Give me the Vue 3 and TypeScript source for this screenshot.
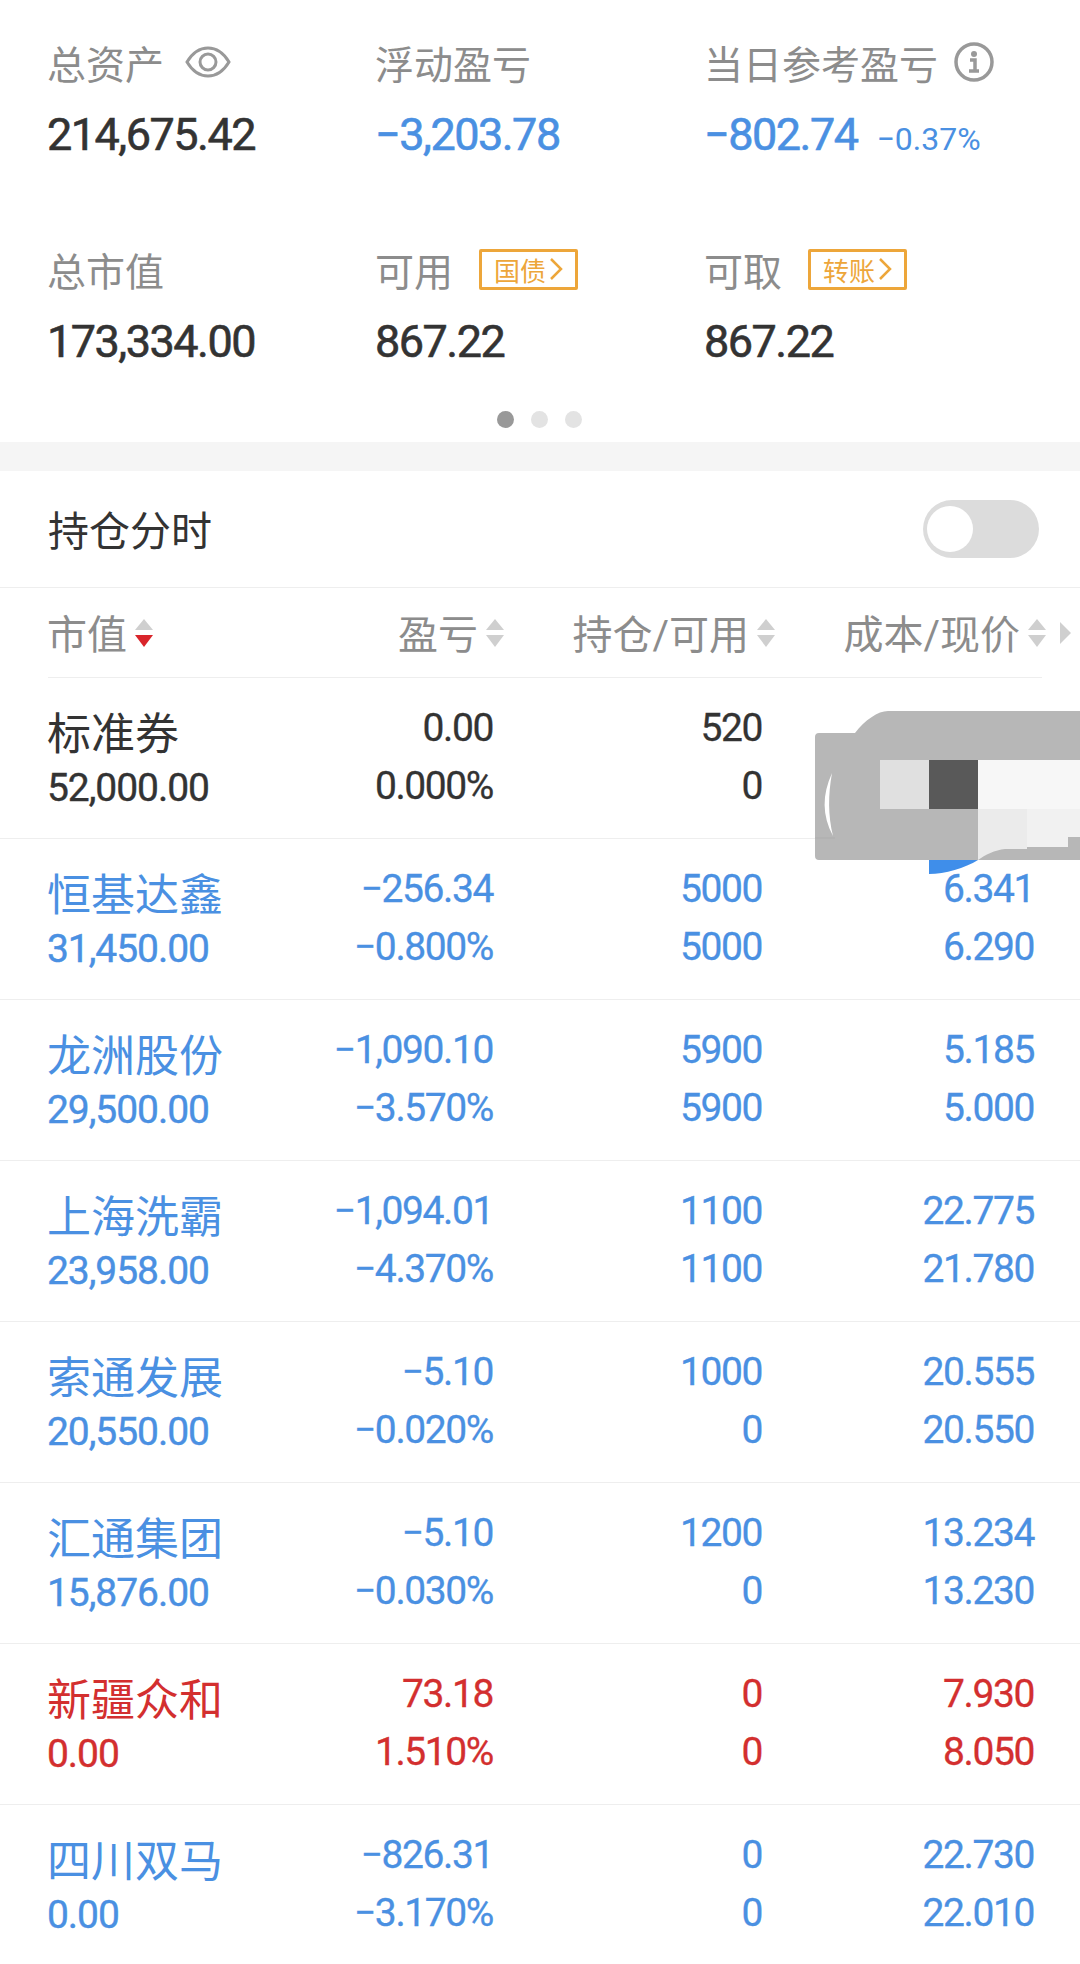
<script setup lang="ts">
interface Position {
  name: string;
  value: string;
  profit: string;
  ratio: string;
  hold: string;
  free: string;
  cost: string;
  price: string;
  tone: "plain" | "down" | "up";
}

const positions: Position[] = [
  { name: "标准券", value: "52,000.00", profit: "0.00", ratio: "0.000%", hold: "520", free: "0", cost: "", price: "", tone: "plain" },
  { name: "恒基达鑫", value: "31,450.00", profit: "−256.34", ratio: "−0.800%", hold: "5000", free: "5000", cost: "6.341", price: "6.290", tone: "down" },
  { name: "龙洲股份", value: "29,500.00", profit: "−1,090.10", ratio: "−3.570%", hold: "5900", free: "5900", cost: "5.185", price: "5.000", tone: "down" },
  { name: "上海洗霸", value: "23,958.00", profit: "−1,094.01", ratio: "−4.370%", hold: "1100", free: "1100", cost: "22.775", price: "21.780", tone: "down" },
  { name: "索通发展", value: "20,550.00", profit: "−5.10", ratio: "−0.020%", hold: "1000", free: "0", cost: "20.555", price: "20.550", tone: "down" },
  { name: "汇通集团", value: "15,876.00", profit: "−5.10", ratio: "−0.030%", hold: "1200", free: "0", cost: "13.234", price: "13.230", tone: "down" },
  { name: "新疆众和", value: "0.00", profit: "73.18", ratio: "1.510%", hold: "0", free: "0", cost: "7.930", price: "8.050", tone: "up" },
  { name: "四川双马", value: "0.00", profit: "−826.31", ratio: "−3.170%", hold: "0", free: "0", cost: "22.730", price: "22.010", tone: "down" },
];

const columns = [
  { label: "市值", active: true },
  { label: "盈亏", active: false },
  { label: "持仓/可用", active: false },
  { label: "成本/现价", active: false },
];
</script>

<template>
  <div class="page">
    <section class="summary">
      <div class="cell">
        <div class="label">
          总资产
          <svg class="eye" viewBox="0 0 46 32" width="46" height="32">
            <path d="M2 16C8 6 15 2 23 2s15 4 21 14c-6 10-13 14-21 14S8 26 2 16Z" />
            <circle cx="23" cy="16" r="8" />
          </svg>
        </div>
        <div class="amount">214,675.42</div>
      </div>
      <div class="cell">
        <div class="label">浮动盈亏</div>
        <div class="amount blue">−3,203.78</div>
      </div>
      <div class="cell">
        <div class="label">
          当日参考盈亏
          <svg class="info" viewBox="0 0 40 40" width="40" height="40">
            <circle cx="20" cy="20" r="18" />
            <circle class="dot" cx="20" cy="12" r="3" />
            <path d="M16 18h5v11M15 29h10" />
          </svg>
        </div>
        <div class="amount blue">−802.74<span class="pct">−0.37%</span></div>
      </div>
      <div class="cell">
        <div class="label">总市值</div>
        <div class="amount">173,334.00</div>
      </div>
      <div class="cell">
        <div class="label">
          可用
          <span class="tag">国债<svg viewBox="0 0 14 24" width="14" height="24"><path d="M2 2l10 10L2 22" /></svg></span>
        </div>
        <div class="amount">867.22</div>
      </div>
      <div class="cell">
        <div class="label">
          可取
          <span class="tag">转账<svg viewBox="0 0 14 24" width="14" height="24"><path d="M2 2l10 10L2 22" /></svg></span>
        </div>
        <div class="amount">867.22</div>
      </div>
    </section>

    <div class="dots">
      <i class="on"></i>
      <i></i>
      <i></i>
    </div>

    <div class="band"></div>

    <div class="toggle-row">
      <span>持仓分时</span>
      <div class="switch"><b></b></div>
    </div>

    <div class="head">
      <div v-for="(c, i) in columns" :key="c.label" class="head-cell">
        <span>{{ c.label }}</span>
        <svg class="sort" viewBox="0 0 18 28" width="18" height="28">
          <path d="M9 0l9 11H0Z" fill="#cfcfcf" />
          <path d="M0 16h18L9 28Z" :fill="c.active ? '#d9252b' : '#cfcfcf'" />
        </svg>
        <svg v-if="i === 3" class="more" viewBox="0 0 11 22" width="11" height="22">
          <path d="M0 0l11 11L0 22Z" fill="#cfcfcf" />
        </svg>
      </div>
    </div>

    <div class="list">
      <div v-for="p in positions" :key="p.name" class="row" :class="p.tone">
        <div class="name-cell">
          <div class="name">{{ p.name }}</div>
          <div class="value">{{ p.value }}</div>
        </div>
        <div class="num"><div>{{ p.profit }}</div><div>{{ p.ratio }}</div></div>
        <div class="num"><div>{{ p.hold }}</div><div>{{ p.free }}</div></div>
        <div class="num"><div>{{ p.cost }}</div><div>{{ p.price }}</div></div>
      </div>
    </div>

    <!-- redaction blob over the first row -->
    <svg class="blob" viewBox="810 705 270 175" width="270" height="175">
      <path d="M815 737q0-4 4-4H855C865 720 878 711 888 711H1080V860H819q-4 0-4-4Z" fill="#b7b7b7" />
      <path d="M832 773C822 795 822 815 833 836C828 815 828 795 832 773Z" fill="#fff" />
      <path d="M815 838H835" stroke="#adadad" stroke-width="1" />
      <rect x="880" y="760" width="49" height="49" fill="#e0e0e0" />
      <rect x="929" y="760" width="49" height="49" fill="#595959" />
      <rect x="978" y="760" width="102" height="49" fill="#f7f7f7" />
      <path d="M978 809H1027V849H1005C995 850 985 855 978 860Z" fill="#ebebeb" />
      <path d="M1027 809H1080V837H1068V847H1027Z" fill="#f1f1f1" />
      <path d="M929 860H978C965 868 945 874 929 874Z" fill="#3f8eea" />
    </svg>
  </div>
</template>

<style scoped>
.page {
  position: relative;
  width: 1080px;
  height: 1964px;
  overflow: hidden;
  background: #fff;
  font-family: Roboto, "Noto Sans CJK SC", sans-serif;
  color: #333;
}

/* ---------- summary ---------- */
.summary {
  display: grid;
  grid-template-columns: 328px 329px 1fr;
  grid-auto-rows: 207px;
  padding: 35px 0 0 47px;
  height: 402px;
  box-sizing: border-box;
}
.label {
  display: flex;
  align-items: center;
  height: 54px;
  font-size: 39px;
  color: #8c8c8c;
}
.amount {
  margin-top: 19px;
  font-size: 45px;
  line-height: 54px;
  letter-spacing: -1.5px;
  -webkit-text-stroke: 0.6px currentColor;
  white-space: nowrap;
}
.blue {
  color: #4a90e2;
}
.pct {
  margin-left: 19px;
  font-size: 32px;
  letter-spacing: 0;
  -webkit-text-stroke: 0;
}
.eye {
  margin-left: 21px;
  fill: none;
  stroke: #999;
  stroke-width: 3;
}
.info {
  margin-left: 16px;
  fill: none;
  stroke: #999;
  stroke-width: 3.5;
}
.info .dot {
  fill: #999;
  stroke: none;
}
.tag {
  display: flex;
  align-items: center;
  justify-content: center;
  gap: 3px;
  width: 99px;
  height: 41px;
  box-sizing: border-box;
  margin-left: 26px;
  border: 3px solid #eda63a;
  border-radius: 2px;
  font-size: 26px;
  color: #eda63a;
}
.tag svg {
  fill: none;
  stroke: #eda63a;
  stroke-width: 2.5;
}

.dots {
  display: flex;
  justify-content: center;
  gap: 17px;
  height: 40px;
  padding-right: 2px;
  padding-top: 9px;
  box-sizing: border-box;
}
.dots i {
  width: 17px;
  height: 17px;
  border-radius: 50%;
  background: #e3e3e3;
}
.dots i.on {
  background: #999;
}
.band {
  height: 29px;
  background: #f5f5f5;
}

/* ---------- toggle ---------- */
.toggle-row {
  display: flex;
  align-items: center;
  justify-content: space-between;
  height: 117px;
  padding: 0 41px 1px 48px;
  border-bottom: 1px solid #eee;
  box-sizing: border-box;
  font-size: 41px;
}
.toggle-row span {
  margin-bottom: 2px;
}
.switch {
  position: relative;
  width: 116px;
  height: 58px;
  border-radius: 29px;
  background: #dcdcdc;
}
.switch b {
  position: absolute;
  top: 6px;
  left: 4px;
  width: 46px;
  height: 46px;
  border-radius: 50%;
  background: #fff;
}

/* ---------- table ---------- */
.head {
  display: grid;
  grid-template-columns: 220px 236px 271px 296px;
  height: 90px;
  margin: 0 38px 0 48px;
  border-bottom: 1px solid #eee;
  box-sizing: border-box;
  font-size: 40px;
  color: #8c8c8c;
  width: 994px;
}
.head-cell {
  display: flex;
  align-items: center;
  justify-content: flex-end;
  gap: 8px;
  white-space: nowrap;
}
.head-cell span {
  margin-bottom: 2px;
}
.head-cell:first-child {
  justify-content: flex-start;
  margin-left: -1px;
}
.more {
  margin-left: 6px;
}
.row {
  display: grid;
  grid-template-columns: 220px 226px 269px 272px;
  height: 161px;
  padding: 0 45px 0 47px;
  border-bottom: 1px solid #eee;
  box-sizing: border-box;
  white-space: nowrap;
}
.row.down {
  color: #4a90e2;
}
.row.up {
  color: #d32f2f;
}
.name-cell {
  padding-top: 28px;
}
.name {
  font-size: 44px;
  line-height: 58px;
}
.value {
  font-size: 39px;
  line-height: 48px;
  letter-spacing: -1.05px;
  -webkit-text-stroke: 0.4px currentColor;
}
.num {
  padding-top: 21px;
  font-size: 39px;
  line-height: 58px;
  letter-spacing: -1.4px;
  -webkit-text-stroke: 0.3px currentColor;
  text-align: right;
}
.blob {
  position: absolute;
  left: 810px;
  top: 705px;
}
</style>

<style>
html,
body {
  margin: 0;
  background: #fff;
}
</style>
